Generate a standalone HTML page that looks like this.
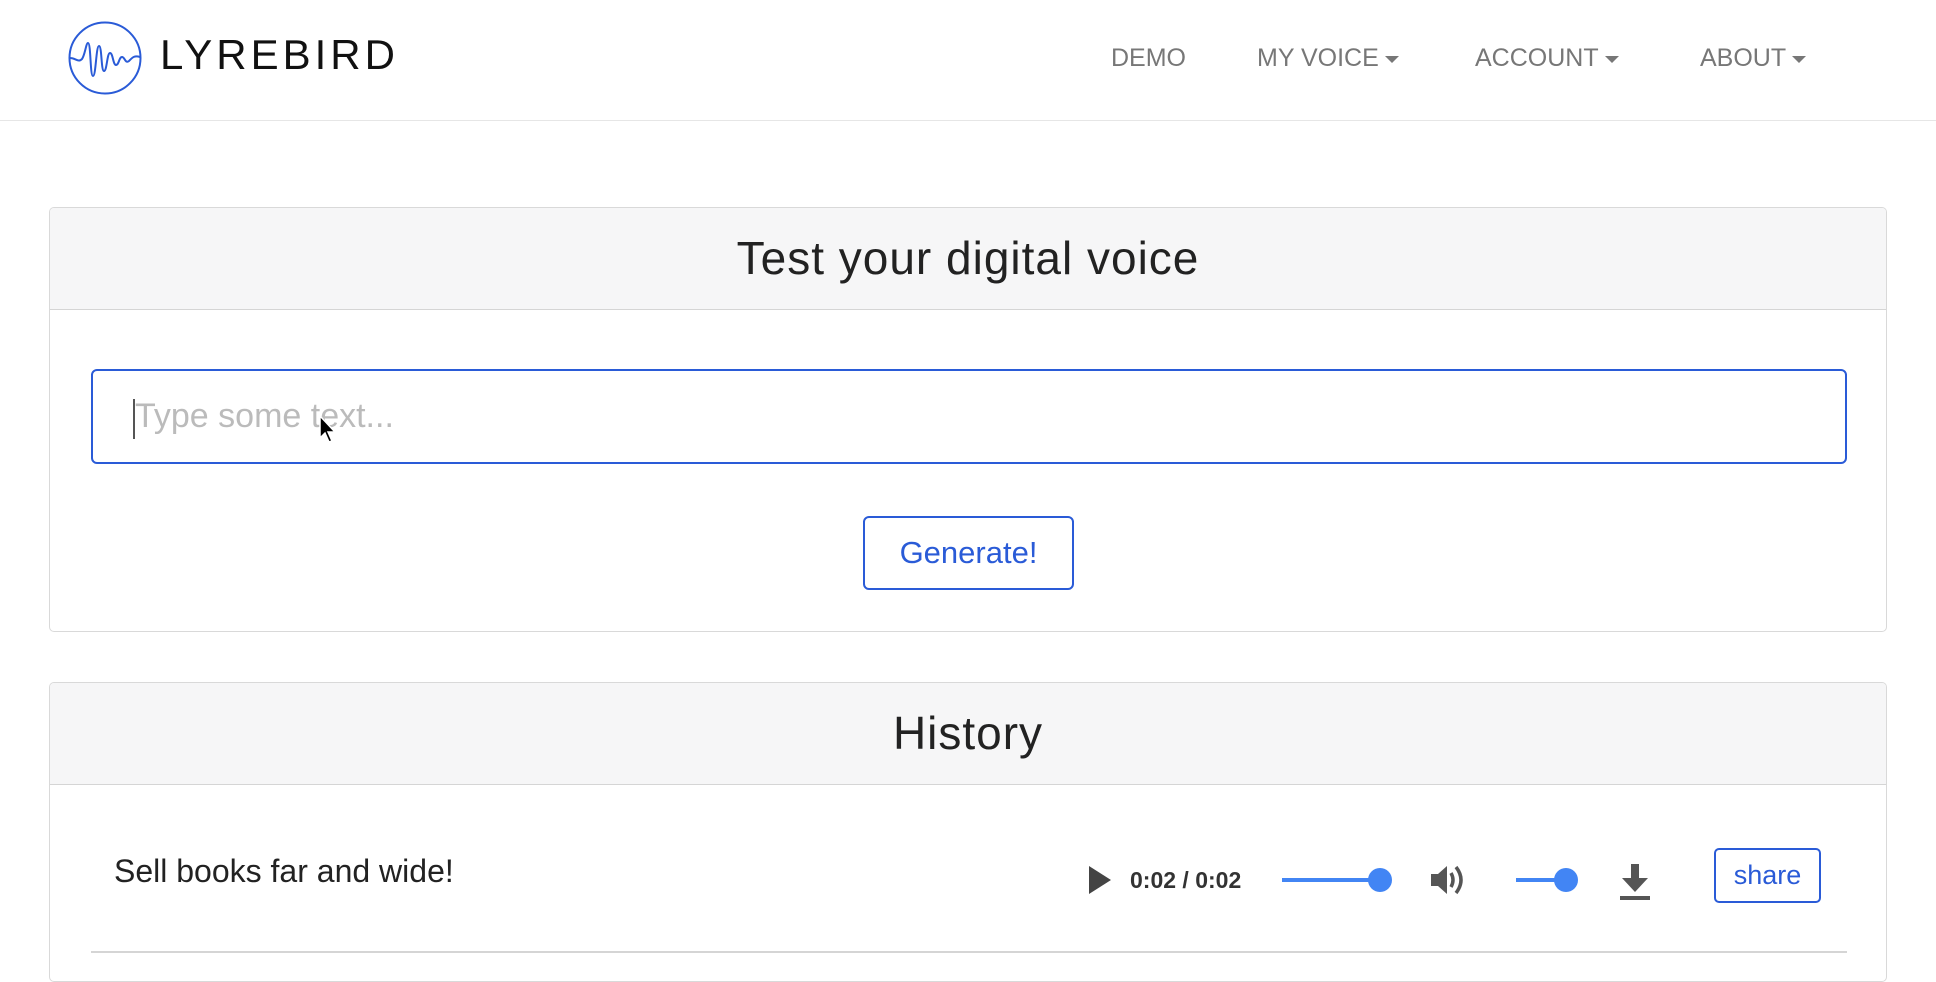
<!DOCTYPE html>
<html><head><meta charset="utf-8"><style>
*{box-sizing:border-box;margin:0;padding:0}
body{width:1936px;height:960px;overflow:hidden;background:#fff;font-family:"Liberation Sans",sans-serif;position:relative;color:#222}
.nav{position:absolute;left:0;top:0;width:1936px;height:121px;border-bottom:1px solid #e6e6e6}
.logo{position:absolute;left:160px;top:31px;font-size:42px;letter-spacing:4px;color:#111;font-weight:300}
.ni{position:absolute;top:44px;font-size:25px;color:#777}
.car{display:inline-block;width:0;height:0;border-left:7px solid transparent;border-right:7px solid transparent;border-top:7px solid #777;vertical-align:middle;margin-left:6px}
.card{position:absolute;left:49px;width:1838px;border:1px solid #d9d9d9;border-radius:5px;overflow:hidden}
.hd{background:#f6f6f7;border-bottom:1px solid #d5d5d5;text-align:center;font-size:46px;letter-spacing:1px;color:#222;font-weight:300}
.input{position:absolute;left:41px;top:161px;width:1756px;height:95px;border:2px solid #2a5bd7;border-radius:6px}
.ph{position:absolute;left:42px;top:26px;font-size:34px;color:#bbb}
.caret{position:absolute;left:40px;top:28px;width:2px;height:40px;background:#555}
.btn{position:absolute;left:813px;top:308px;width:211px;height:74px;border:2px solid #2a5bd7;border-radius:6px;color:#2a5bd7;font-size:31px;text-align:center;line-height:70px}
</style></head><body>
<div class="nav">
<svg style="position:absolute;left:68px;top:21px" width="74" height="74" viewBox="0 0 74 74"><circle cx="37" cy="37" r="35.5" fill="none" stroke="#2a5bd7" stroke-width="2"/><path d="M2 37 C8 37 10 42 14 38 C17 34 18 22 20 22 C23 22 22 55 25 55 C28 55 28 25 31 25 C34 25 33 50 36 50 C39 50 39 32 42 32 C45 32 45 44 48 44 C51 44 51 36 54 36 C57 36 57 43 61 40 C64 37 66 34 72 36" fill="none" stroke="#2a5bd7" stroke-width="2"/></svg>
<div class="logo">LYREBIRD</div>
<div class="ni" style="left:1111px">DEMO</div>
<div class="ni" style="left:1257px">MY VOICE<span class="car"></span></div>
<div class="ni" style="left:1475px">ACCOUNT<span class="car"></span></div>
<div class="ni" style="left:1700px">ABOUT<span class="car"></span></div>
</div>
<div class="card" style="top:207px;height:425px">
<div class="hd" style="height:102px;line-height:100px">Test your digital voice</div>
<div class="input"><div class="caret"></div><div class="ph">Type some text...</div></div>
<div class="btn">Generate!</div>
</div>
<svg style="position:absolute;left:318px;top:414px" width="22" height="32" viewBox="0 0 22 32"><path d="M2 2 L2 24 L7 19 L11 28 L14 27 L10 18 L17 18 Z" fill="#000" stroke="#fff" stroke-width="1.5"/></svg>
<div class="card" style="top:682px;height:300px">
<div class="hd" style="height:102px;line-height:100px">History</div>
<div style="position:absolute;left:64px;top:170px;font-size:32px;color:#222">Sell books far and wide!</div>
<div style="position:absolute;left:41px;top:268px;width:1756px;height:2px;background:#d5d5d5"></div>
</div>
<svg style="position:absolute;left:1089px;top:866px" width="22" height="28"><path d="M0 0 L22 14 L0 28Z" fill="#444"/></svg>
<div style="position:absolute;left:1130px;top:867px;font-size:23px;color:#333;font-weight:bold">0:02 / 0:02</div>
<div style="position:absolute;left:1282px;top:878px;width:100px;height:4px;background:#4285f4"></div>
<div style="position:absolute;left:1368px;top:868px;width:24px;height:24px;border-radius:50%;background:#4285f4"></div>
<svg style="position:absolute;left:1430px;top:862px" width="38" height="36" viewBox="0 0 38 36"><path d="M1 12 H8 L17 4 V32 L8 24 H1Z" fill="#555"/><path d="M21 11 Q25 18 21 25" fill="none" stroke="#555" stroke-width="3.5"/><path d="M26 5 Q36 18 26 31" fill="none" stroke="#555" stroke-width="3.5"/></svg>
<div style="position:absolute;left:1516px;top:878px;width:50px;height:4px;background:#4285f4"></div>
<div style="position:absolute;left:1554px;top:868px;width:24px;height:24px;border-radius:50%;background:#4285f4"></div>
<svg style="position:absolute;left:1620px;top:864px" width="30" height="36" viewBox="0 0 30 36"><path d="M11 0 H19 V14 H28 L15 28 L2 14 H11Z" fill="#555"/><rect x="0" y="32" width="30" height="4" fill="#555"/></svg>
<div style="position:absolute;left:1714px;top:848px;width:107px;height:55px;border:2px solid #2a5bd7;border-radius:5px;color:#2a5bd7;font-size:27px;text-align:center;line-height:50px">share</div>
</body></html>
